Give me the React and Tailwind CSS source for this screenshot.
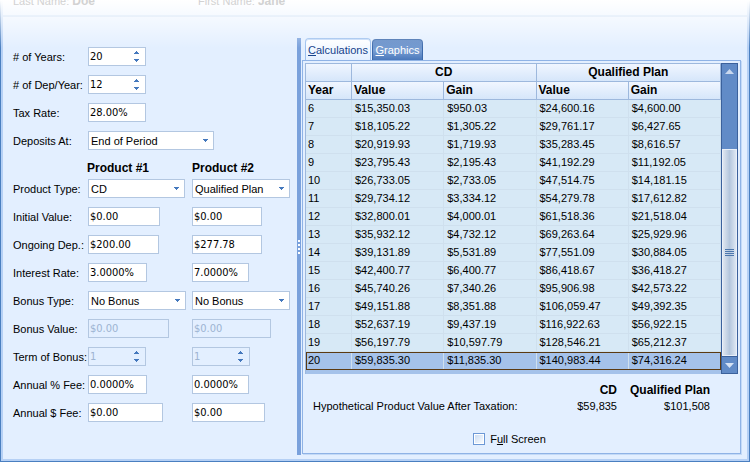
import React, { useState } from 'react';

const rows = [
    [6, '$15,350.03', '$950.03', '$24,600.16', '$4,600.00'],
    [7, '$18,105.22', '$1,305.22', '$29,761.17', '$6,427.65'],
    [8, '$20,919.93', '$1,719.93', '$35,283.45', '$8,616.57'],
    [9, '$23,795.43', '$2,195.43', '$41,192.29', '$11,192.05'],
    [10, '$26,733.05', '$2,733.05', '$47,514.75', '$14,181.15'],
    [11, '$29,734.12', '$3,334.12', '$54,279.78', '$17,612.82'],
    [12, '$32,800.01', '$4,000.01', '$61,518.36', '$21,518.04'],
    [13, '$35,932.12', '$4,732.12', '$69,263.64', '$25,929.96'],
    [14, '$39,131.89', '$5,531.89', '$77,551.09', '$30,884.05'],
    [15, '$42,400.77', '$6,400.77', '$86,418.67', '$36,418.27'],
    [16, '$45,740.26', '$7,340.26', '$95,906.98', '$42,573.22'],
    [17, '$49,151.88', '$8,351.88', '$106,059.47', '$49,392.35'],
    [18, '$52,637.19', '$9,437.19', '$116,922.63', '$56,922.15'],
    [19, '$56,197.79', '$10,597.79', '$128,546.21', '$65,212.37'],
    [20, '$59,835.30', '$11,835.30', '$140,983.44', '$74,316.24'],
];

function Arrow({ up, className }) {
    return (
        <svg viewBox="0 0 5 3" className={className} fill="currentColor" shapeRendering="crispEdges" aria-hidden="true">
            <path d={up ? 'M2 0h1v1h1v1h1v1H0V2h1V1h1z' : 'M0 0h5v1H4v1H3v1H2V2H1V1H0z'} />
        </svg>
    );
}

function ScrollArrow({ up }) {
    return (
        <svg viewBox="0 0 9 5" className="block h-[5px] w-[9px]" fill="currentColor" aria-hidden="true">
            <path d={up ? 'M4.5 0L9 5H0z' : 'M0 0h9L4.5 5z'} />
        </svg>
    );
}

function TextBox({ id, value, label, width, disabled }) {
    return (
        <input
            id={id}
            type="text"
            aria-label={label}
            defaultValue={value}
            disabled={disabled}
            className={`${width} h-[19px] border border-[#b3c7e1] bg-white px-px font-['DejaVu_Sans_Condensed','DejaVu_Sans',sans-serif] text-[11px] leading-4 outline-none disabled:bg-[#e3efff] disabled:text-[#9db4d2]`}
        />
    );
}

function Spinner({ id, initial, label, disabled }) {
    const [value, setValue] = useState(initial);

    return (
        <div className={`flex h-[19px] w-[58px] border border-[#b3c7e1] ${disabled ? 'bg-[#e3efff]' : 'bg-white'}`}>
            <input
                id={id}
                type="text"
                aria-label={label}
                value={value}
                onChange={(e) => setValue(Number(e.target.value) || 0)}
                disabled={disabled}
                className="w-0 flex-1 px-px font-['DejaVu_Sans_Condensed','DejaVu_Sans',sans-serif] text-[11px] leading-4 outline-none disabled:text-[#9db4d2]"
            />
            <div className="flex w-[17px] flex-col items-center justify-center gap-[5px] text-[#4478bd]">
                <button type="button" aria-label="Increase" disabled={disabled} onClick={() => setValue(value + 1)}>
                    <Arrow up className="block h-[3px] w-[5px]" />
                </button>
                <button type="button" aria-label="Decrease" disabled={disabled} onClick={() => setValue(value - 1)}>
                    <Arrow className="block h-[3px] w-[5px]" />
                </button>
            </div>
        </div>
    );
}

function Select({ id, value, label, options, width }) {
    return (
        <div className={`relative ${width}`}>
            <select
                id={id}
                aria-label={label}
                defaultValue={value}
                className="block h-[19px] w-full appearance-none border border-[#b3c7e1] bg-white pr-4 pl-[2px] text-[11px] leading-4 outline-none"
            >
                {options.map((o) => (
                    <option key={o}>{o}</option>
                ))}
            </select>
            <Arrow className="pointer-events-none absolute top-2 right-[6px] h-[3px] w-[5px] text-[#4478bd]" />
        </div>
    );
}

function Field({ id, label, children }) {
    return (
        <div className="grid h-[19px] grid-cols-[75px_104px_1fr] items-center">
            <label htmlFor={id} className="whitespace-nowrap">{label}</label>
            {children}
        </div>
    );
}

const bonusTypes = ['No Bonus', 'Percent', 'Dollar'];
const products = ['CD', 'Qualified Plan', 'Annuity'];

function InputPanel() {
    return (
        <form className="flex w-[293px] shrink-0 flex-col gap-[9px] pt-[30px] pl-[9px]">
            <Field id="years" label="# of Years:">
                <Spinner id="years" initial={20} />
            </Field>
            <Field id="deposits" label="# of Dep/Year:">
                <Spinner id="deposits" initial={12} />
            </Field>
            <Field id="tax" label="Tax Rate:">
                <TextBox id="tax" value="28.00%" width="w-[58px]" />
            </Field>
            <Field id="depositsAt" label="Deposits At:">
                <Select id="depositsAt" value="End of Period" options={['End of Period', 'Start of Period']} width="w-[126px]" />
            </Field>
            <div className="grid h-[11px] grid-cols-[74px_105px_1fr] text-xs leading-[19px] font-bold">
                <span />
                <span>Product #1</span>
                <span>Product #2</span>
            </div>
            <Field id="type1" label="Product Type:">
                <Select id="type1" value="CD" options={products} width="w-[97px]" />
                <Select label="Product Type, Product #2" value="Qualified Plan" options={products} width="w-[98px]" />
            </Field>
            <Field id="initial1" label="Initial Value:">
                <TextBox id="initial1" value="$0.00" width="w-[72px]" />
                <TextBox label="Initial Value, Product #2" value="$0.00" width="w-[70px]" />
            </Field>
            <Field id="ongoing1" label="Ongoing Dep.:">
                <TextBox id="ongoing1" value="$200.00" width="w-[71px]" />
                <TextBox label="Ongoing Dep., Product #2" value="$277.78" width="w-[70px]" />
            </Field>
            <Field id="rate1" label="Interest Rate:">
                <TextBox id="rate1" value="3.0000%" width="w-[59px]" />
                <TextBox label="Interest Rate, Product #2" value="7.0000%" width="w-[57px]" />
            </Field>
            <Field id="bonusType1" label="Bonus Type:">
                <Select id="bonusType1" value="No Bonus" options={bonusTypes} width="w-[98px]" />
                <Select label="Bonus Type, Product #2" value="No Bonus" options={bonusTypes} width="w-[98px]" />
            </Field>
            <Field id="bonus1" label="Bonus Value:">
                <TextBox id="bonus1" value="$0.00" width="w-[81px]" disabled />
                <TextBox label="Bonus Value, Product #2" value="$0.00" width="w-[79px]" disabled />
            </Field>
            <Field id="term1" label="Term of Bonus:">
                <Spinner id="term1" initial={1} disabled />
                <Spinner label="Term of Bonus, Product #2" initial={1} disabled />
            </Field>
            <Field id="pctFee1" label="Annual % Fee:">
                <TextBox id="pctFee1" value="0.0000%" width="w-[59px]" />
                <TextBox label="Annual % Fee, Product #2" value="0.0000%" width="w-[57px]" />
            </Field>
            <Field id="fee1" label="Annual $ Fee:">
                <TextBox id="fee1" value="$0.00" width="w-[75px]" />
                <TextBox label="Annual $ Fee, Product #2" value="$0.00" width="w-[73px]" />
            </Field>
        </form>
    );
}

function ScrollBar() {
    return (
        <div className="flex w-[17px] shrink-0 flex-col border border-[#3b619c] bg-[#618bc7]">
            <button type="button" aria-label="Scroll up" className="flex h-[14px] items-center justify-center text-[#c9d8ee]">
                <ScrollArrow up />
            </button>
            <div className="h-[71px]" />
            <div className="flex flex-1 flex-col items-center justify-center gap-px border border-[#e9eff8] bg-linear-to-r from-[#dfe6f0] via-[#b4c6dd] to-[#dde7f3]">
                <span className="h-px w-[9px] bg-[#4d77ad]" />
                <span className="h-px w-[9px] bg-[#4d77ad]" />
                <span className="h-px w-[9px] bg-[#4d77ad]" />
                <span className="h-px w-[9px] bg-[#4d77ad]" />
            </div>
            <button type="button" aria-label="Scroll down" className="flex h-[17px] items-center justify-center border-t border-[#3b619c] text-[#d5e2f4]">
                <ScrollArrow />
            </button>
        </div>
    );
}

function ResultsTable() {
    const head = 'h-[18px] border-r border-b border-[#9db8dd] bg-linear-to-b from-[#f0f6ff] to-[#d6e6fa] p-0';

    return (
        <div className="flex-1 border-t border-l border-[#9db8dd] bg-[#a5c2ea] pb-1">
            <table className="w-full table-fixed border-separate border-spacing-0">
                <colgroup>
                    <col className="w-[46px]" />
                    <col span={4} />
                </colgroup>
                <thead className="text-xs leading-[17px]">
                    <tr>
                        <th className={head} />
                        <th colSpan={2} className={head}>CD</th>
                        <th colSpan={2} className={head}>Qualified Plan</th>
                    </tr>
                    <tr className="text-left">
                        {['Year', 'Value', 'Gain', 'Value', 'Gain'].map((name, i) => (
                            <th key={i} className={`${head} pl-[2px]`}>{name}</th>
                        ))}
                    </tr>
                </thead>
                <tbody>
                    {rows.map((row) => (
                        <tr key={row[0]} className={row[0] === 20 ? 'bg-[#a5c2ea] outline outline-offset-[-1px] outline-[#5b3a12]' : 'bg-[#d7e9f6]'}>
                            {row.map((cell, i) => (
                                <td key={i} className={`h-[18px] border-r border-b border-[#cfe0ee] p-0 leading-[17px] ${i ? 'pl-[3px]' : 'pl-[2px]'}`}>
                                    {cell}
                                </td>
                            ))}
                        </tr>
                    ))}
                </tbody>
            </table>
        </div>
    );
}

function ResultsPanel() {
    return (
        <section className="flex min-w-0 flex-1 flex-col pt-[21px] pr-[6px] pb-[5px] pl-px">
            <div role="tablist" className="flex items-end gap-px pl-[3px]">
                <button type="button" role="tab" aria-selected="true" className="h-[22px] w-[66px] rounded-t border border-b-0 border-[#9bbfee] bg-linear-to-b from-white to-[#e3efff] text-[11px] whitespace-nowrap text-[#15428b] shadow-[inset_0_1px_0_#c5dbf8]">
                    <u>C</u>alculations
                </button>
                <button type="button" role="tab" aria-selected="false" className="h-[21px] w-[51px] rounded-t border border-b-0 border-[#3b69ab] bg-linear-to-b from-[#5a85c3] via-[#7ba0d4] to-[#4a78bb] text-[11px] whitespace-nowrap text-white">
                    <u>G</u>raphics
                </button>
            </div>
            <div className="flex flex-1 flex-col border border-[#8fb3e6] px-[2px] pt-[2px] shadow-[1px_1px_0_#c4daf7]">
                <div className="flex">
                    <ResultsTable />
                    <ScrollBar />
                </div>
                <div className="grid grid-cols-[1fr_auto_auto] gap-x-[13px] pt-2 pr-[28px] pl-2 text-right leading-4">
                    <span />
                    <b className="text-xs leading-4">CD</b>
                    <b className="text-xs leading-4">Qualified Plan</b>
                    <span className="text-left">Hypothetical Product Value After Taxation:</span>
                    <span>$59,835</span>
                    <span>$101,508</span>
                </div>
                <label className="flex items-center gap-[5px] self-center pt-[17px] pr-6 leading-4">
                    <input
                        type="checkbox"
                        className="size-3 appearance-none border border-[#6c98d6] bg-linear-to-br from-[#c6d9f2] to-white shadow-[inset_0_0_0_1px_#ffffff] checked:bg-[#4478bd]"
                    />
                    <span>F<u>u</u>ll Screen</span>
                </label>
            </div>
        </section>
    );
}

export default function App() {
    return (
        <div className="relative flex min-h-screen flex-col border-x border-b border-[#4a7fc0] bg-[#e3efff] font-['Liberation_Sans',Arial,sans-serif] text-[11px] leading-4 text-black">
            <div className="flex flex-1 flex-col border-x-2 border-b-2 border-[#b5d0f5]">
                <header className="z-10 flex h-[15px] overflow-hidden pl-[10px] text-[#d2d2d2]">
                    <div className="-mt-[7px] w-[185px]">Last Name: <b className="text-xs leading-4">Doe</b></div>
                    <div className="-mt-[7px]">First Name: <b className="text-xs leading-4">Jane</b></div>
                </header>
                <main className="flex flex-1 border-t-2 border-[#bfd6f2] pl-px">
                    <InputPanel />
                    <div className="mt-[21px] mb-1 flex w-1 shrink-0 flex-col items-center justify-center gap-[2px] bg-[#7aa1dc]">
                        <span className="size-[2px] bg-white" />
                        <span className="size-[2px] bg-white" />
                        <span className="size-[2px] bg-white" />
                        <span className="size-[2px] bg-white" />
                    </div>
                    <ResultsPanel />
                </main>
            </div>
            {/* white fade over the top edge */}
            <div className="pointer-events-none absolute -inset-x-px top-0 h-12 bg-linear-to-b from-white via-white/50 to-transparent" />
        </div>
    );
}
